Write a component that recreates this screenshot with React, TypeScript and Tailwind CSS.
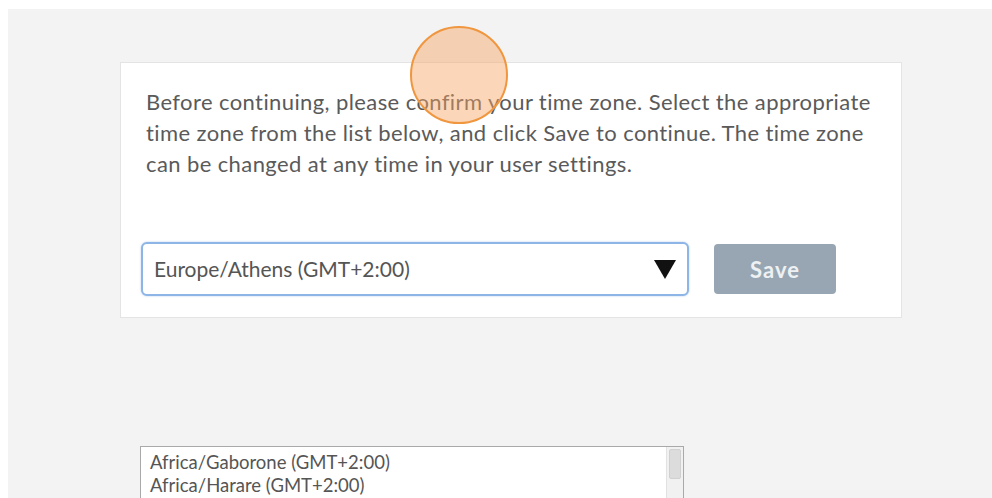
import { useState } from "react";

const zones = ["Africa/Gaborone (GMT+2:00)", "Africa/Harare (GMT+2:00)"];

export default function App() {
  const [zone] = useState("Europe/Athens (GMT+2:00)");

  return (
    <div
      className="relative h-[498px] overflow-hidden bg-white pl-[8px] pt-[9px]"
      style={{ fontFamily: "Lato, 'Open Sans', sans-serif" }}
    >
      <div className="h-[489px] bg-[#f3f3f3] pl-[112px] pt-[53px]">
        {/* confirmation card */}
        <div className="w-[782px] border border-[#e4e4e4] bg-white px-[20px] pb-[21px] pt-[23px]">
          <p className="whitespace-nowrap pl-[5px] text-[22px] leading-[31px] tracking-[0.4px] text-[#5a5a5a]">
            Before continuing, please confirm your time zone. Select the appropriate
            <br />
            time zone from the list below, and click Save to continue. The time zone
            <br />
            can be changed at any time in your user settings.
          </p>

          <div className="mt-[63px] flex items-center gap-[25px]">
            <div className="flex h-[54px] w-[548px] items-center justify-between rounded-[6px] border-2 border-[#8db6e6] bg-white pl-[11px] pr-[10px] shadow-[0_0_2px_rgba(100,150,220,0.5)]">
              <span className="text-[21px] text-[#555]">{zone}</span>
              <svg width="24" height="22" viewBox="0 0 24 22">
                <path d="M1 2h22L12 21z" fill="#111" />
              </svg>
            </div>
            <button className="h-[50px] w-[122px] rounded-[4px] bg-[#97a6b2] text-[22px] font-bold tracking-[1px] text-[#eef1f3]">
              Save
            </button>
          </div>
        </div>

        {/* open list of zones */}
        <div className="ml-[20px] mt-[128px] flex h-[60px] w-[544px] border border-[#a9a9a9] bg-white">
          <div className="flex-1 pl-[9px] pt-[4px] text-[18.5px] leading-[23px] text-[#555]">
            {zones.map((z) => (
              <div key={z}>{z}</div>
            ))}
          </div>
          <div className="w-[17px] border-l border-[#e2e2e2] bg-[#f1f1f1] p-[2px]">
            <div className="h-[30px] rounded-[2px] border border-[#d0d0d0] bg-[#dcdcdc]" />
          </div>
        </div>
      </div>

      {/* click marker */}
      <div className="absolute left-[410px] top-[26px] h-[98px] w-[98px] rounded-full border-2 border-[#f0963e] bg-[#f6a563]/45" />
    </div>
  );
}
